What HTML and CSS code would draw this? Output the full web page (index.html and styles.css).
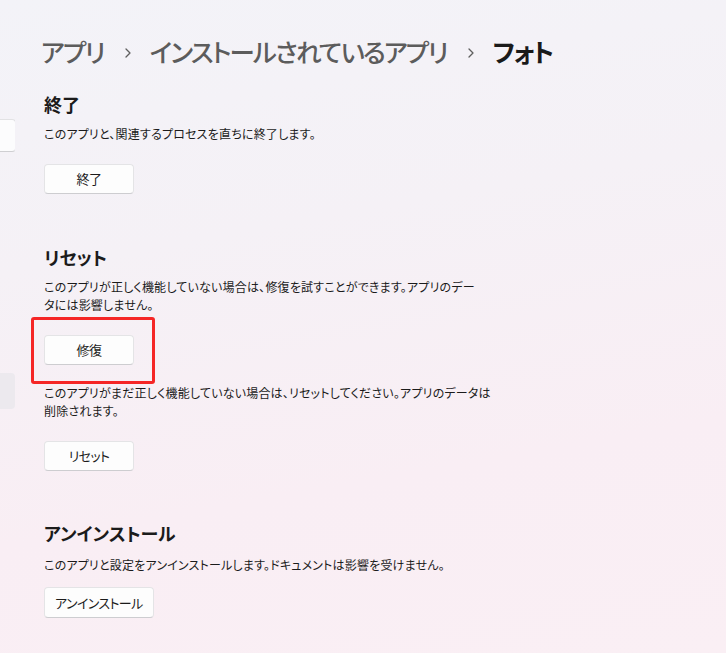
FILE: index.html
```html
<!DOCTYPE html>
<html lang="ja">
<head>
<meta charset="utf-8">
<title>フォト</title>
<link rel="stylesheet" href="styles.css">
</head>
<body>
<div class="page">
  <aside class="side">
    <div class="side-btn"></div>
    <div class="side-item"></div>
  </aside>
  <main class="main">
    <nav class="crumbs">
      <span class="crumb">アプリ</span>
      <svg class="chev" width="8" height="10" viewBox="0 0 8 10"><path d="M2 1 L6 5 L2 9" fill="none" stroke="#5f5f5f" stroke-width="1.3" stroke-linecap="round" stroke-linejoin="round"/></svg>
      <span class="crumb">インストールされているアプリ</span>
      <svg class="chev" width="8" height="10" viewBox="0 0 8 10"><path d="M2 1 L6 5 L2 9" fill="none" stroke="#5f5f5f" stroke-width="1.3" stroke-linecap="round" stroke-linejoin="round"/></svg>
      <span class="crumb current">フォト</span>
    </nav>

    <section class="sec sec-end">
      <h2 class="title">終了</h2>
      <p class="desc">このアプリと、関連するプロセスを直ちに終了します。</p>
      <button class="btn">終了</button>
    </section>

    <section class="sec sec-reset">
      <h2 class="title">リセット</h2>
      <p class="desc">このアプリが正しく機能していない場合は、修復を試すことができます。アプリのデー<br>タには影響しません。</p>
      <div class="mark-wrap">
        <button class="btn">修復</button>
        <span class="mark"></span>
      </div>
      <p class="desc desc2">このアプリがまだ正しく機能していない場合は、リセットしてください。アプリのデータは<br>削除されます。</p>
      <button class="btn btn-reset">リセット</button>
    </section>

    <section class="sec sec-un">
      <h2 class="title">アンインストール</h2>
      <p class="desc">このアプリと設定をアンインストールします。ドキュメントは影響を受けません。</p>
      <button class="btn">アンインストール</button>
    </section>
  </main>
</div>
</body>
</html>
```

FILE: styles.css
```css
html, body {
  margin: 0;
  padding: 0;
  height: 100%;
}
body {
  background: linear-gradient(170deg, #f3f3f8 0%, #f5f1f6 35%, #f9eef4 70%, #faeff4 100%);
  font-family: "Noto Sans CJK JP", "Noto Sans", sans-serif;
  font-feature-settings: "palt" 1;
  color: #1b1b1b;
  overflow: hidden;
}
.page {
  display: flex;
  min-height: 653px;
}
.side {
  width: 15px;
  flex: none;
  overflow: hidden;
  padding-top: 119px;
  display: flex;
  flex-direction: column;
}
.side-btn {
  width: 30px;
  height: 31px;
  margin-left: -16px;
  background: #fcfcfd;
  border: 1px solid #e2e2e4;
  border-bottom-color: #cfcfd2;
  border-radius: 4px;
}
.side-item {
  width: 30px;
  height: 36px;
  margin-left: -15px;
  margin-top: 221px;
  background: #ece9ee;
  border-radius: 4px;
}
.main {
  padding-left: 29px;
  display: flex;
  flex-direction: column;
  align-items: flex-start;
}
.crumbs {
  display: flex;
  align-items: center;
  height: 36px;
  margin-top: 33px;
  margin-left: -3px;
}
.crumb {
  font-size: 25.5px;
  line-height: 36px;
  font-weight: 500;
  color: #5c5c5c;
  letter-spacing: -1.8px;
}
.crumb.current {
  color: #1a1a1a;
  font-weight: 700;
}
.chev {
  margin: 3px 18px 0 20px;
}
.sec {
  display: flex;
  flex-direction: column;
  align-items: flex-start;
}
.title {
  margin: 0;
  font-size: 18px;
  line-height: 24px;
  font-weight: 700;
  color: #1b1b1b;
}
.desc {
  margin: 9px 0 0 0;
  font-size: 12px;
  line-height: 18px;
  color: #1b1b1b;
  white-space: nowrap;
  letter-spacing: 0.2px;
}
.btn {
  margin-top: 21px;
  min-width: 90px;
  height: 30px;
  padding: 0 10px;
  background: #fdfdfd;
  border: 1px solid #e4e4e6;
  border-bottom-color: #cdcdd0;
  border-radius: 4px;
  font-family: inherit;
  font-feature-settings: "palt" 1;
  font-size: 13px;
  letter-spacing: -0.6px;
  color: #1b1b1b;
  line-height: 28px;
}
.sec-end {
  margin-top: 23px;
}
.sec-reset {
  margin-top: 51px;
}
.mark-wrap {
  position: relative;
  margin-top: 21px;
}
.mark-wrap .btn {
  margin-top: 0;
}
.mark {
  position: absolute;
  left: -13px;
  top: -18px;
  right: -21px;
  bottom: -19px;
  border: 3px solid #f52626;
  border-radius: 3px;
  pointer-events: none;
}
.desc2 {
  margin-top: 19px;
}
.btn-reset {
  margin-top: 21px;
}
.sec-un {
  margin-top: 50px;
}
.sec-un .desc {
  margin-top: 11px;
}
.sec-un .btn {
  margin-top: 13px;
  height: 31px;
}
```
